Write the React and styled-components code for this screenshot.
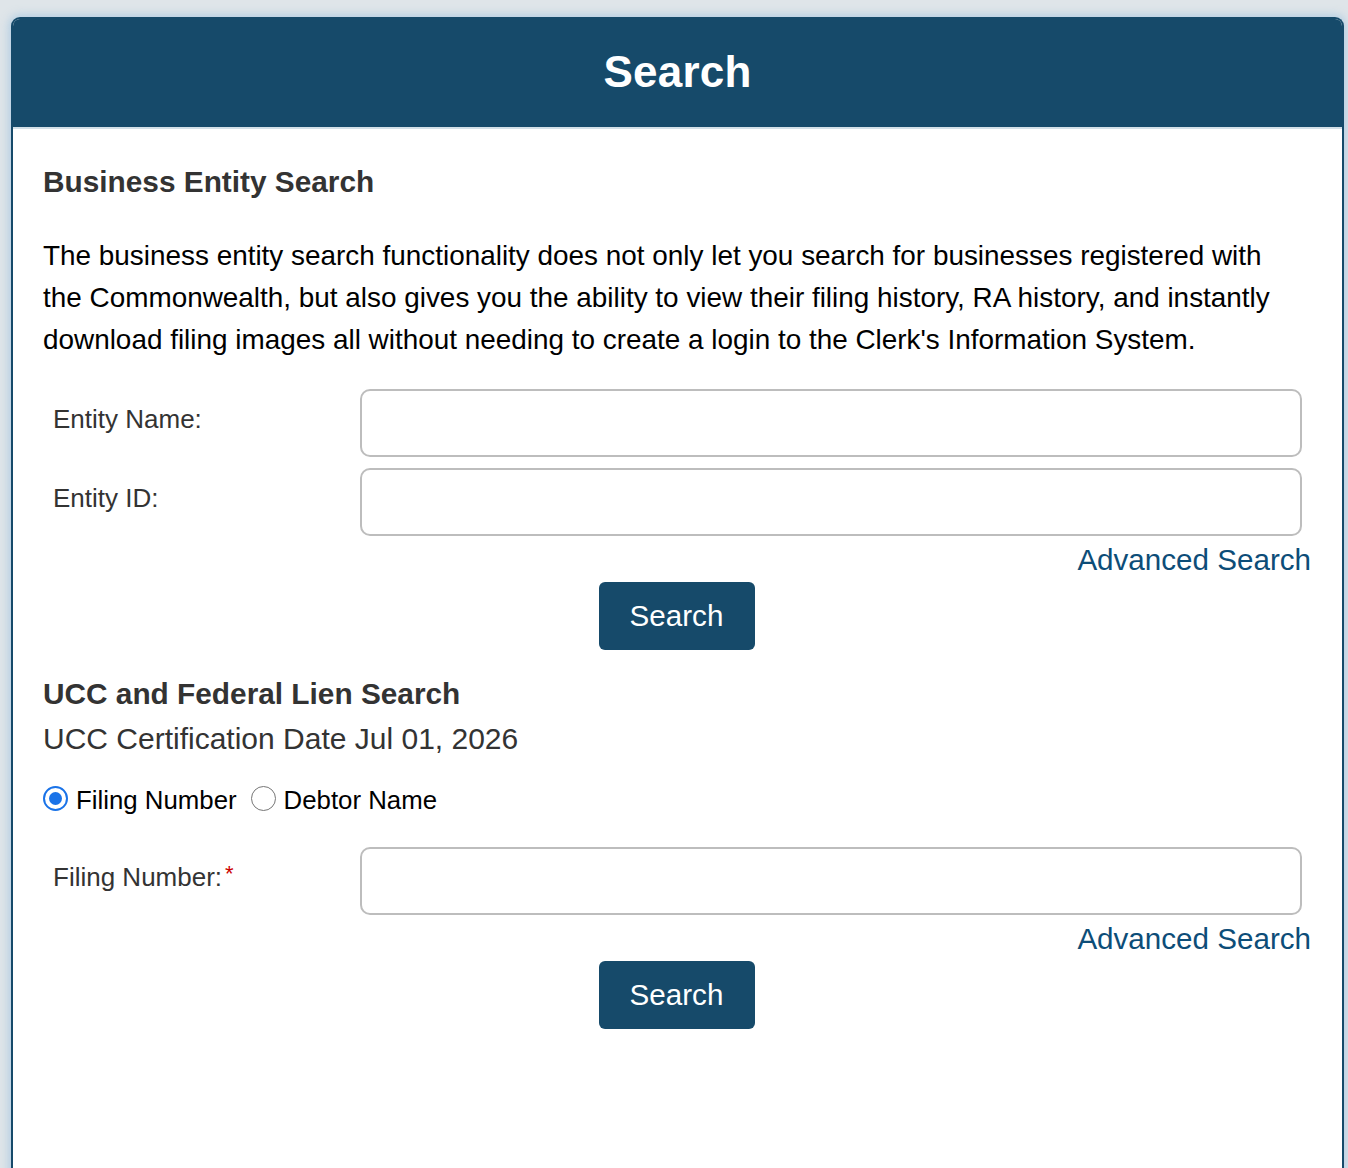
import React, { useState } from "react";
import styled, { createGlobalStyle } from "styled-components";

const Global = createGlobalStyle`
  html, body { margin: 0; padding: 0; }
  body {
    background: #dfe5e9;
    font-family: "Liberation Sans", Arial, Helvetica, sans-serif;
    color: #333;
  }
`;

const Page = styled.div`
  padding: 17px 4px 0 11px;
  min-height: 1168px;
  box-sizing: border-box;
  overflow: hidden;
`;

const Card = styled.div`
  background: #fff;
  border: 2px solid #164a6a;
  border-bottom: none;
  border-radius: 9px 9px 0 0;
  box-shadow: 0 0 10px 2px rgba(160, 196, 224, 0.75);
  min-height: 1200px;
  overflow: hidden;
`;

const Header = styled.div`
  background: #164a6a;
  height: 108px;
  display: flex;
  align-items: center;
  justify-content: center;
  border-bottom: 2px solid #d3e0e8;
`;

const Title = styled.h1`
  margin: 0;
  color: #fff;
  font-size: 44px;
  font-weight: 700;
  letter-spacing: 0.2px;
  padding-bottom: 2px;
`;

const Body = styled.div`
  padding: 30px 30px 0 30px;
  display: flex;
  flex-direction: column;
`;

const SectionTitle = styled.h2`
  margin: ${(p) => p.$top || 0}px 0 0;
  font-size: 29.8px;
  line-height: 46px;
  font-weight: 700;
  color: #333;
`;

const Paragraph = styled.p`
  margin: 30px 0 0;
  padding-right: 26px;
  font-size: 27.9px;
  line-height: 42px;
  color: #000;
`;

const FormRow = styled.div`
  display: grid;
  grid-template-columns: 317px 1fr;
  align-items: start;
  margin-top: ${(p) => p.$top || 0}px;
`;

const Label = styled.label`
  padding: 14px 0 0 10px;
  font-size: 26px;
  color: #333;
  line-height: 32px;
`;

const Required = styled.span`
  color: #c00;
  font-size: 22px;
  vertical-align: top;
  margin-left: 3px;
  line-height: 26px;
`;

const TextInput = styled.input`
  box-sizing: border-box;
  display: block;
  width: calc(100% - 10px);
  height: 68px;
  margin: 0 10px 0 0;
  border: 2px solid #bdbdbd;
  border-radius: 10px;
  background: #fff;
  font-size: 26px;
  padding: 0 14px;
  outline: none;
  font-family: inherit;
`;

const LinkRow = styled.div`
  display: flex;
  justify-content: flex-end;
  margin-top: ${(p) => p.$top || 0}px;
`;

const AdvLink = styled.a`
  color: #0d4d78;
  font-size: 29.6px;
  line-height: 34px;
  text-decoration: none;
  cursor: pointer;
  margin-right: 1px;
`;

const ButtonRow = styled.div`
  display: flex;
  justify-content: center;
  margin-top: ${(p) => p.$top || 0}px;
`;

const Button = styled.button`
  width: 156px;
  height: 68px;
  background: #164a6a;
  color: #fff;
  border: none;
  border-radius: 6px;
  font-family: inherit;
  font-size: 29.6px;
  cursor: pointer;
  margin-right: 2px;
`;

const SubText = styled.div`
  font-size: 30px;
  line-height: 44px;
  color: #333;
`;

const RadioGroup = styled.div`
  display: flex;
  align-items: center;
  gap: 14px;
  margin-top: 23px;
`;

const RadioOption = styled.label`
  display: flex;
  align-items: center;
  gap: 8px;
  font-size: 25.8px;
  color: #000;
  cursor: pointer;
  line-height: 32px;
`;

const RadioCircle = styled.span`
  box-sizing: border-box;
  width: 25px;
  height: 25px;
  border-radius: 50%;
  flex: none;
  position: relative;
  top: -2px;
  border: ${(p) => (p.$checked ? "2px solid #1a73e8" : "1.5px solid #767676")};
  background: #fff;
  display: flex;
  align-items: center;
  justify-content: center;
  &::after {
    content: "";
    width: 13px;
    height: 13px;
    border-radius: 50%;
    background: ${(p) => (p.$checked ? "#1a73e8" : "transparent")};
  }
`;

const HiddenRadio = styled.input`
  display: none;
`;

export default function App() {
  const [mode, setMode] = useState("filing");
  return (
    <>
      <Global />
      <Page>
        <Card>
          <Header>
            <Title>Search</Title>
          </Header>
          <Body>
            <SectionTitle>Business Entity Search</SectionTitle>
            <Paragraph>
              The business entity search functionality does not only let you search for businesses registered with
              the Commonwealth, but also gives you the ability to view their filing history, RA history, and instantly
              download filing images all without needing to create a login to the Clerk's Information System.
            </Paragraph>
            <FormRow $top={28}>
              <Label htmlFor="entityName">Entity Name:</Label>
              <TextInput id="entityName" type="text" />
            </FormRow>
            <FormRow $top={11}>
              <Label htmlFor="entityId">Entity ID:</Label>
              <TextInput id="entityId" type="text" />
            </FormRow>
            <LinkRow $top={7}>
              <AdvLink>Advanced Search</AdvLink>
            </LinkRow>
            <ButtonRow $top={5}>
              <Button>Search</Button>
            </ButtonRow>
            <SectionTitle $top={21}>UCC and Federal Lien Search</SectionTitle>
            <SubText>UCC Certification Date Jul 01, 2026</SubText>
            <RadioGroup>
              <RadioOption onClick={() => setMode("filing")}>
                <HiddenRadio type="radio" name="ucc" readOnly checked={mode === "filing"} />
                <RadioCircle $checked={mode === "filing"} />
                Filing Number
              </RadioOption>
              <RadioOption onClick={() => setMode("debtor")}>
                <HiddenRadio type="radio" name="ucc" readOnly checked={mode === "debtor"} />
                <RadioCircle $checked={mode === "debtor"} />
                Debtor Name
              </RadioOption>
            </RadioGroup>
            <FormRow $top={31}>
              <Label htmlFor="filingNumber">
                Filing Number:<Required>*</Required>
              </Label>
              <TextInput id="filingNumber" type="text" />
            </FormRow>
            <LinkRow $top={7}>
              <AdvLink>Advanced Search</AdvLink>
            </LinkRow>
            <ButtonRow $top={5}>
              <Button>Search</Button>
            </ButtonRow>
          </Body>
        </Card>
      </Page>
    </>
  );
}
